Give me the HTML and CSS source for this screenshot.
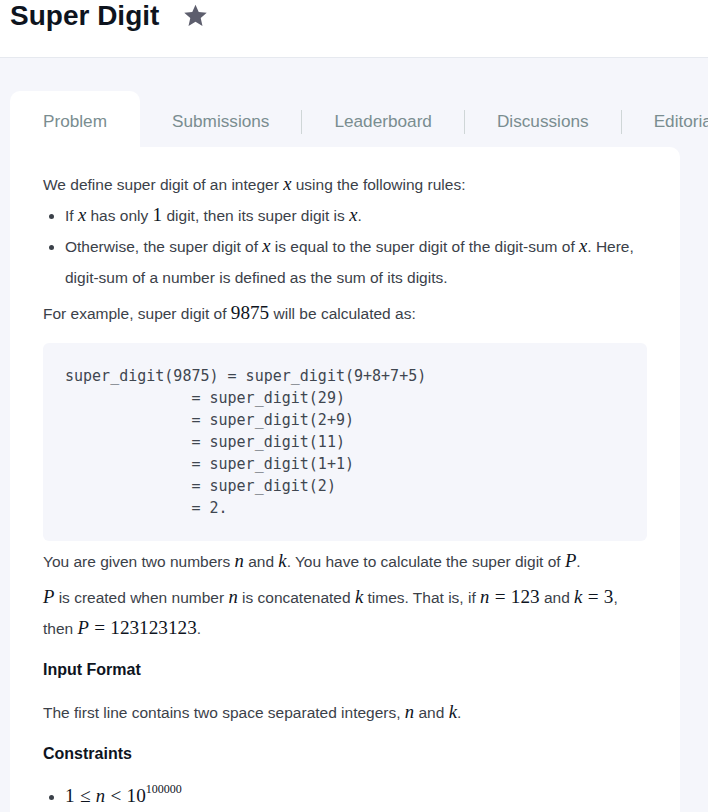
FILE: index.html
```html
<!DOCTYPE html>
<html lang="en">
<head>
<meta charset="utf-8">
<title>Super Digit</title>
<link rel="stylesheet" href="styles.css">
</head>
<body>
<header class="page-header">
  <h1 class="title">Super Digit</h1>
  <svg class="star" viewBox="0 0 24 24" aria-hidden="true"><path d="M12 1.6l3.1 7.1 7.7.7-5.8 5.1 1.7 7.6L12 18.1l-6.7 4 1.7-7.6-5.8-5.1 7.7-.7z"/></svg>
</header>
<main class="main">
  <nav class="tabs">
    <span class="tab active">Problem</span>
    <span class="tab">Submissions</span>
    <span class="divider"></span>
    <span class="tab">Leaderboard</span>
    <span class="divider"></span>
    <span class="tab">Discussions</span>
    <span class="divider"></span>
    <span class="tab">Editorial</span>
  </nav>
  <section class="card">
    <p>We define super digit of an integer <i class="m">x</i> using the following rules:</p>
    <ul class="list">
      <li>If <i class="m">x</i> has only <span class="mn">1</span> digit, then its super digit is <i class="m">x</i>.</li>
      <li>Otherwise, the super digit of <i class="m">x</i> is equal to the super digit of the digit-sum of <i class="m">x</i>. Here, digit-sum of a number is defined as the sum of its digits.</li>
    </ul>
    <p>For example, super digit of <span class="mn">9875</span> will be calculated as:</p>
    <pre class="code">super_digit(9875) = super_digit(9+8+7+5)
              = super_digit(29)
              = super_digit(2+9)
              = super_digit(11)
              = super_digit(1+1)
              = super_digit(2)
              = 2.</pre>
    <p>You are given two numbers <i class="m">n</i> and <i class="m">k</i>. You have to calculate the super digit of <i class="m">P</i>.</p>
    <p><i class="m">P</i> is created when number <i class="m">n</i> is concatenated <i class="m">k</i> times. That is, if <i class="m">n</i> <span class="mn op">=</span> <span class="mn">123</span> and <i class="m">k</i> <span class="mn op">=</span> <span class="mn">3</span>, then <i class="m">P</i> <span class="mn op">=</span> <span class="mn">123123123</span>.</p>
    <h3 class="section">Input Format</h3>
    <p>The first line contains two space separated integers, <i class="m">n</i> and <i class="m">k</i>.</p>
    <h3 class="section">Constraints</h3>
    <ul class="list">
      <li><span class="mn">1</span> <span class="mn op">≤</span> <i class="m">n</i> <span class="mn op">&lt;</span> <span class="mn">10<sup class="sup">100000</sup></span></li>
    </ul>
  </section>
</main>
</body>
</html>
```

FILE: styles.css
```css
html, body {
  margin: 0;
  padding: 0;
  overflow: hidden;
  background: #f5f6fb;
}
body {
  font-family: "Liberation Sans", Arial, sans-serif;
  color: #3b4149;
}
.page-header {
  background: #fff;
  height: 57px;
  border-bottom: 1px solid #e6e9ef;
  display: flex;
  align-items: flex-start;
  padding-left: 10px;
  gap: 24px;
}
.title {
  margin: 0;
  font-size: 28px;
  line-height: 32px;
  font-weight: 700;
  color: #0e141e;
}
.star {
  width: 25px;
  height: 25px;
  margin-top: 3px;
  fill: #5d5e6d;
}
.main {
  padding: 33px 0 0 10px;
}
.tabs {
  display: flex;
  align-items: center;
  height: 56px;
  white-space: nowrap;
}
.tab {
  font-size: 17.2px;
  color: #7a8d90;
  padding: 0 32px;
  height: 56px;
  line-height: 61px;
}
.tab.active {
  background: #fff;
  border-radius: 10px 10px 0 0;
  padding: 0 33px;
}
.divider {
  width: 1px;
  height: 24px;
  margin-top: 5px;
  background: #cfd6d7;
  flex: none;
}
.card {
  background: #fff;
  width: 604px;
  padding: 22px 33px 40px 33px;
  border-radius: 0 10px 0 0;
  font-size: 15.5px;
  line-height: 31px;
}
.card p {
  margin: 0 0 5px 0;
}
.card p:first-child {
  margin-bottom: 0;
}
.list {
  margin: 0 0 5px 0;
  padding-left: 22px;
}
.m {
  font-family: "Liberation Serif", "Times New Roman", serif;
  font-style: italic;
  font-size: 1.2em;
  line-height: 1;
  color: #0e141e;
}
.mn {
  font-family: "Liberation Serif", "Times New Roman", serif;
  font-size: 1.24em;
  line-height: 1;
  color: #0e141e;
}
.op {
  padding: 0 1px;
}
.sup {
  font-size: 12px;
  line-height: 0;
  vertical-align: 9px;
}
.code {
  margin: 14px 0 5px 0;
  background: #f5f6fb;
  border-radius: 6px;
  padding: 22px;
  font-family: "DejaVu Sans Mono", monospace;
  font-size: 15px;
  line-height: 22px;
  color: #3f4650;
}
.section {
  margin: 10px 0 12px 0;
  font-size: 16px;
  line-height: 31px;
  font-weight: 700;
  color: #0e141e;
}
```
